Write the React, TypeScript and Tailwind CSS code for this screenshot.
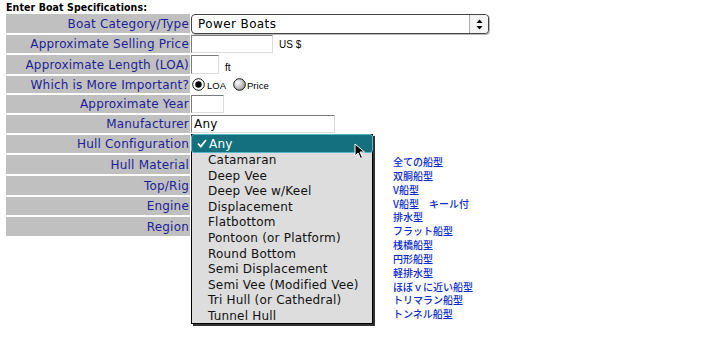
import React from "react";

const labelFont = { fontFamily: '"DejaVu Sans", "Liberation Sans", sans-serif' };

function Input({ w, h, value }: { w: number; h: number; value?: string }) {
  return (
    <div
      className="bg-white border-t border-l border-t-[#7a7a7a] border-l-[#7a7a7a] border-b border-r border-b-[#dcdcdc] border-r-[#dcdcdc] text-[12px] text-black pl-[2px] leading-[17px] tracking-[0.2px]"
      style={{ width: w, height: h }}
    >
      {value}
    </div>
  );
}

const rows = [
  { label: "Boat Category/Type", h: 19 },
  { label: "Approximate Selling Price", h: 18 },
  { label: "Approximate Length (LOA)", h: 19 },
  { label: "Which is More Important?", h: 17 },
  { label: "Approximate Year", h: 18 },
  { label: "Manufacturer", h: 18 },
  { label: "Hull Configuration", h: 18 },
  { label: "Hull Material", h: 19 },
  { label: "Top/Rig", h: 19 },
  { label: "Engine", h: 18 },
  { label: "Region", h: 19 },
];

const menuItems = [
  "Catamaran",
  "Deep Vee",
  "Deep Vee w/Keel",
  "Displacement",
  "Flatbottom",
  "Pontoon (or Platform)",
  "Round Bottom",
  "Semi Displacement",
  "Semi Vee (Modified Vee)",
  "Tri Hull (or Cathedral)",
  "Tunnel Hull",
];

const jp = [
  "全ての船型",
  "双胴船型",
  "V船型",
  "V船型　キール付",
  "排水型",
  "フラット船型",
  "桟橋船型",
  "円形船型",
  "軽排水型",
  "ほぼｖに近い船型",
  "トリマラン船型",
  "トンネル船型",
];

function Radio({ checked }: { checked: boolean }) {
  return (
    <svg width="13" height="13" viewBox="0 0 13 13">
      <defs>
        <radialGradient id="rg2" cx="0.35" cy="0.35" r="0.7">
          <stop offset="0" stopColor="#ffffff" />
          <stop offset="1" stopColor="#9a9a9a" />
        </radialGradient>
      </defs>
      <circle cx="6.5" cy="6.5" r="5.8" fill={checked ? "#ffffff" : "url(#rg2)"} stroke="#111" strokeWidth="1" />
      {checked && <circle cx="6.5" cy="6.5" r="3.2" fill="#000" />}
    </svg>
  );
}

function Value({ i }: { i: number }) {
  switch (i) {
    case 0:
      return (
        <div className="w-[298px] h-[20px] rounded-[4px] border border-[#444] bg-white flex items-center shadow-[1px_1px_0_#bbb]">
          <span className="flex-1 pl-[6px] text-[12px] tracking-[0.4px] text-black" style={labelFont}>
            Power Boats
          </span>
          <div className="w-[19px] h-full border-l border-[#aaa] flex items-center justify-center bg-[#f4f4f4] rounded-r-[4px]">
            <svg width="7" height="11" viewBox="0 0 7 11">
              <path d="M3.5 0.5 L6.5 4 L0.5 4 Z" fill="#000" />
              <path d="M3.5 10.5 L6.5 7 L0.5 7 Z" fill="#000" />
            </svg>
          </div>
        </div>
      );
    case 1:
      return (
        <div className="flex items-end h-full">
          <Input w={82} h={18} />
          <span className="ml-[6px] mb-[1px] text-[10px] text-black" style={{ fontFamily: '"Liberation Sans Narrow", "Liberation Sans", sans-serif' }}>
            US $
          </span>
        </div>
      );
    case 2:
      return (
        <div className="flex items-end h-full">
          <Input w={28} h={19} />
          <span className="ml-[6px] -mb-[1px] text-[10px] text-black" style={{ fontFamily: '"Liberation Sans", sans-serif' }}>
            ft
          </span>
        </div>
      );
    case 3:
      return (
        <div className="flex items-center h-full pl-[1px] text-[9.5px] text-black" style={{ fontFamily: '"Liberation Sans Narrow", "Liberation Sans", sans-serif' }}>
          <Radio checked />
          <span className="ml-[2px] mt-[3px]">LOA</span>
          <span className="ml-[7px]">
            <Radio checked={false} />
          </span>
          <span className="ml-[1px] mt-[3px]">Price</span>
        </div>
      );
    case 4:
      return <Input w={33} h={18} />;
    case 5:
      return <Input w={144} h={18} value="Any" />;
    default:
      return null;
  }
}

export default function App() {
  return (
    <div className="w-[720px] h-[350px] bg-white relative overflow-hidden" style={labelFont}>
      <div className="pl-[6px]">
        <div className="h-[14px] leading-[14px] text-[10.5px] tracking-[0.1px] font-bold text-black" style={{ fontFamily: '"DejaVu Sans Condensed", "Liberation Sans", sans-serif' }}>
          Enter Boat Specifications:
        </div>
        <div className="flex flex-col gap-[2px]">
          {rows.map((r, i) => (
            <div key={i} className="flex gap-[1px]" style={{ height: r.h }}>
              <div className="w-[184px] bg-[#c0c0c0] flex items-center justify-end pr-[1px] text-[12px] tracking-[0.2px] text-[#1e1e96] whitespace-nowrap">
                {r.label}
              </div>
              <div className="relative">
                <Value i={i} />
              </div>
            </div>
          ))}
        </div>
      </div>

      {/* popup menu */}
      <div className="absolute left-[191px] top-[134px] w-[182px] h-[190px] bg-[#dddddd] border border-black shadow-[2px_2px_0_#333] text-[12px] tracking-[0.2px] text-[#111]">
        <div className="h-[19px] -mx-[1px] -mt-[1px] rounded-[3px] bg-[#15707e] border border-[#58b4c2] flex items-center text-white">
          <svg width="10" height="9" viewBox="0 0 10 9" className="ml-[5px]">
            <path d="M1 4.5 L3.8 7.5 L9 1" stroke="#fff" strokeWidth="1.8" fill="none" />
          </svg>
          <span className="ml-[2px] text-[12px]">Any</span>
        </div>
        {menuItems.map((m) => (
          <div key={m} className="h-[15.6px] leading-[15.6px] pl-[16px] whitespace-nowrap">
            {m}
          </div>
        ))}
      </div>

      {/* cursor */}
      <svg className="absolute left-[354px] top-[143px]" width="12" height="17" viewBox="0 0 12 17">
        <path d="M1 1 L1 13 L4 10 L6.5 15.5 L8.5 14.5 L6 9 L10.5 9 Z" fill="#000" stroke="#fff" strokeWidth="1" />
      </svg>

      {/* japanese legend */}
      <div
        className="absolute left-[393px] top-[155px] text-[10px] leading-[13.85px] text-[#0a2ad0] font-medium"
        style={{ fontFamily: '"Noto Sans CJK JP", "DejaVu Sans", sans-serif' }}
      >
        {jp.map((t) => (
          <div key={t} className="whitespace-pre">
            {t}
          </div>
        ))}
      </div>
    </div>
  );
}
